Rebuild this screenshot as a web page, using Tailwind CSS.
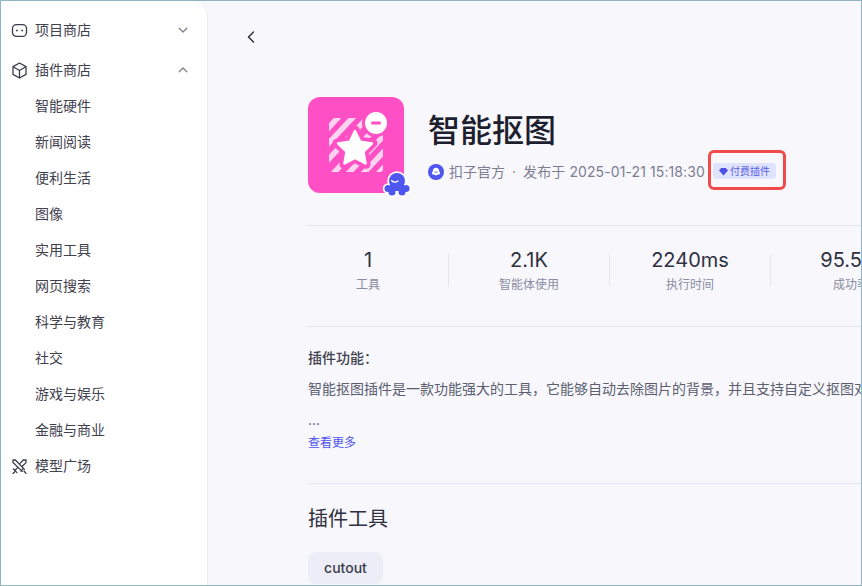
<!DOCTYPE html>
<html lang="zh-CN">
  <head>
    <meta charset="UTF-8" />
    <meta name="viewport" content="width=device-width, initial-scale=1.0" />
    <title>智能抠图</title>
    <script src="https://cdn.jsdelivr.net/npm/@tailwindcss/browser@4"></script>
  </head>
  <body class="m-0 overflow-hidden bg-[#f7f7fc] font-['Inter','Noto_Sans_CJK_SC',sans-serif]">
    <div class="flex h-[586px] w-[862px] overflow-hidden border border-[#8fb4c4] bg-[#f7f7fc]">
      <!-- sidebar -->
      <aside class="h-full w-[207px] shrink-0 rounded-tr-2xl border-r border-[#ebebf3] bg-white pt-[11px] text-sm text-[#3f414e]">
        <div class="flex h-9 items-center pl-[10px] pr-[19px]">
          <svg class="mr-[7px] size-[17px] text-[#3a3c4a]" viewBox="0 0 17 17" fill="none" stroke="currentColor" stroke-width="1.3">
            <rect x="1.5" y="2.6" width="14" height="11.8" rx="4" />
            <circle cx="5.9" cy="8.5" r="0.9" fill="currentColor" stroke="none" />
            <circle cx="11.1" cy="8.5" r="0.9" fill="currentColor" stroke="none" />
          </svg>
          <span class="flex-1">项目商店</span>
          <svg class="size-[10px] text-[#7e8092]" viewBox="0 0 10 10" fill="none" stroke="currentColor" stroke-width="1.3" stroke-linecap="round" stroke-linejoin="round"><path d="M1.2 3.2 5 7l3.8-3.8" /></svg>
        </div>
        <div class="mt-1 flex h-9 items-center pl-[10px] pr-[19px]">
          <svg class="mr-[7px] size-[17px] text-[#3a3c4a]" viewBox="0 0 17 17" fill="none" stroke="currentColor" stroke-width="1.3" stroke-linejoin="round">
            <path d="M8.5 1 15 4.600v7.800L8.500 16 2 12.400V4.600Z" />
            <path d="M2.200 4.800 8.500 8.500l6.300-3.700M8.500 8.500V16" />
          </svg>
          <span class="flex-1">插件商店</span>
          <svg class="size-[10px] text-[#7e8092]" viewBox="0 0 10 10" fill="none" stroke="currentColor" stroke-width="1.3" stroke-linecap="round" stroke-linejoin="round"><path d="M1.2 6.800 5 3l3.800 3.800" /></svg>
        </div>
        <ul class="pl-[34px]">
          <li class="flex h-9 items-center">智能硬件</li>
          <li class="flex h-9 items-center">新闻阅读</li>
          <li class="flex h-9 items-center">便利生活</li>
          <li class="flex h-9 items-center">图像</li>
          <li class="flex h-9 items-center">实用工具</li>
          <li class="flex h-9 items-center">网页搜索</li>
          <li class="flex h-9 items-center">科学与教育</li>
          <li class="flex h-9 items-center">社交</li>
          <li class="flex h-9 items-center">游戏与娱乐</li>
          <li class="flex h-9 items-center">金融与商业</li>
        </ul>
        <div class="flex h-9 items-center pl-[10px] pr-[18px]">
          <svg class="mr-[7px] size-[17px] text-[#3a3c4a]" viewBox="0 0 17 17" fill="none" stroke="currentColor" stroke-width="1.3" stroke-linecap="round">
            <path d="M2 2h2.400l9 9.400M2 2v2.400l9.200 9" />
            <path d="M15 2h-2.600L8.800 5.600M15 2v2.600l-3.400 3.400" />
            <path d="M2.400 11l3.600 3.600M3.600 14 2 15.400M12.400 10.400 10 13.200M13 13l2 2.400M6.600 9.600 4 12.400" />
          </svg>
          <span>模型广场</span>
        </div>
      </aside>

      <!-- main -->
      <main class="min-w-0 flex-1 overflow-hidden pl-[100px]">
        <button class="-ml-[64px] mt-[29px] block size-[14px] text-[#2f3140]">
          <svg class="size-[14px]" viewBox="0 0 14 14" fill="none" stroke="currentColor" stroke-width="1.5" stroke-linecap="round" stroke-linejoin="round"><path d="M9.500 2 4.500 7l5 5" /></svg>
        </button>

        <div class="mt-[53px] flex items-start">
          <div class="relative size-24 shrink-0">
            <svg class="size-24 rounded-xl" viewBox="0 0 96 96">
              <defs>
                <clipPath id="tile"><rect x="21" y="21" width="54" height="54" rx="3" /></clipPath>
              </defs>
              <rect width="96" height="96" fill="#ff4fc4" />
              <g clip-path="url(#tile)" stroke="#ffd2f0" stroke-width="5.500">
                <path d="M15 37 35 15M15 52 50 15M15 68 65 15M22 80 82 15M37 80 82 32M52 80 82 48M67 80 82 64" />
              </g>
              <path d="M47 33l5.500 11.300 12.500 1.800-9 8.800 2.100 12.400L47 61.400l-11.100 5.900L38 54.900l-9-8.800 12.500-1.800Z" fill="#ff4fc4" stroke="#ff4fc4" stroke-width="9" stroke-linejoin="round" />
              <path d="M47 34l5.200 10.700 11.800 1.700-8.500 8.300 2 11.700L47 60.900l-10.500 5.500 2-11.700-8.500-8.300 11.800-1.700Z" fill="#fff" stroke="#fff" stroke-width="2.500" stroke-linejoin="round" />
              <circle cx="68" cy="26" r="14" fill="#ff4fc4" />
              <circle cx="68" cy="26" r="11" fill="#fff" />
              <rect x="63" y="24.500" width="10" height="3" rx="1.500" fill="#ff4fc4" />
            </svg>
            <svg class="absolute -bottom-[8px] -right-[9px] size-[32px]" viewBox="0 0 32 32">
              <g fill="#fff" stroke="#fff" stroke-width="3.500">
                <circle cx="16" cy="12" r="8" />
                <circle cx="7" cy="19.500" r="3.500" />
                <circle cx="25" cy="19.500" r="3.500" />
                <circle cx="11" cy="23" r="3.500" />
                <circle cx="21" cy="23" r="3.500" />
              </g>
              <g fill="#4e55f0">
                <circle cx="16" cy="12" r="8" />
                <rect x="9" y="14" width="14" height="8" />
                <circle cx="7" cy="19.500" r="3.500" />
                <circle cx="25" cy="19.500" r="3.500" />
                <circle cx="11" cy="23" r="3.500" />
                <circle cx="21" cy="23" r="3.500" />
              </g>
              <path d="M10.500 11.500q3 3 6.500 .5" fill="none" stroke="#fff" stroke-width="1.300" stroke-linecap="round" />
            </svg>
          </div>

          <div class="ml-6 min-w-0">
            <h1 class="mt-[14px] whitespace-nowrap text-[32px] leading-10 font-medium text-[#1d1f2e]">智能抠图</h1>
            <div class="mt-px flex h-10 items-center whitespace-nowrap text-sm text-[#7c7e92]">
              <svg class="mr-[5px] size-[16px] shrink-0" viewBox="0 0 16 16">
                <circle cx="8" cy="8" r="8" fill="#4e55f0" />
                <path d="M8 3.800c2 0 3.200 1.400 3.200 3.200 0 .8.800 1.200.8 2.200 0 1.300-1.300 1.400-1.800 1-.7 1.300-3.700 1.300-4.400 0-.5.400-1.800.3-1.800-1 0-1 .8-1.400.8-2.200 0-1.800 1.200-3.200 3.200-3.200Z" fill="#fff" />
                <path d="M6.500 7.800q1.500 1.200 3 0" fill="none" stroke="#4e55f0" stroke-width=".9" />
              </svg>
              <span>扣子官方</span>
              <span class="mx-[7px]">·</span>
              <span class="tracking-[0.1px]">发布于 2025-01-21 15:18:30</span>
              <span class="relative ml-[8px] flex h-4 w-[63px] shrink-0 -translate-y-px items-center justify-center rounded bg-[#e0e3fd] text-[10px] text-[#5a5ee8]">
                <svg class="mr-[2px] size-[9px]" viewBox="0 0 10 10" fill="#4b50e6"><path d="M2.400 1h5.200L10 4 5 9.500 0 4Z" /></svg>
                付费插件
                <span class="absolute -bottom-[11px] -left-[5px] -right-[10px] -top-[13px] rounded-[6px] border-[3px] border-[#f04a4a]"></span>
              </span>
            </div>
          </div>
        </div>

        <div class="mt-[32px] w-[700px] border-t border-[#e4e5f0]">
          <div class="-ml-5 flex h-[100px] items-start whitespace-nowrap pt-5">
            <div class="w-[160px] shrink-0 text-center">
              <div class="text-xl leading-7 text-[#2f3140]">1</div>
              <div class="mt-px text-xs leading-5 text-[#8a8c9f]">工具</div>
            </div>
            <div class="mt-2 h-8 w-px shrink-0 bg-[#e4e5f0]"></div>
            <div class="w-[160px] shrink-0 text-center">
              <div class="text-xl leading-7 text-[#2f3140]">2.1K</div>
              <div class="mt-px text-xs leading-5 text-[#8a8c9f]">智能体使用</div>
            </div>
            <div class="mt-2 h-8 w-px shrink-0 bg-[#e4e5f0]"></div>
            <div class="w-[160px] shrink-0 text-center">
              <div class="text-xl leading-7 text-[#2f3140]">2240ms</div>
              <div class="mt-px text-xs leading-5 text-[#8a8c9f]">执行时间</div>
            </div>
            <div class="mt-2 h-8 w-px shrink-0 bg-[#e4e5f0]"></div>
            <div class="w-[160px] shrink-0 text-center">
              <div class="text-xl leading-7 text-[#2f3140]">95.5%</div>
              <div class="mt-px text-xs leading-5 text-[#8a8c9f]">成功率</div>
            </div>
          </div>
        </div>

        <section class="w-[700px] border-t border-[#e4e5f0] pt-[21px]">
          <h2 class="text-sm leading-5 font-medium text-[#3f414e]">插件功能：</h2>
          <p class="mt-[11px] whitespace-nowrap text-sm leading-5 text-[#5c5e70]">智能抠图插件是一款功能强大的工具，它能够自动去除图片的背景，并且支持自定义抠图对象和背景颜色。</p>
          <p class="mt-[11px] text-sm leading-5 text-[#5c5e70]">...</p>
          <a class="mt-[3px] block text-xs leading-5 text-[#4d53ee]">查看更多</a>
        </section>

        <section class="mt-[30px] w-[700px] border-t border-[#e4e5f0] pt-[21px]">
          <h2 class="text-xl leading-7 font-normal text-[#2f3140]">插件工具</h2>
          <button class="mt-[19px] flex h-[32px] w-[75px] items-center justify-center rounded-lg bg-[#ecedf6] text-sm font-medium text-[#3a3c4a]">cutout</button>
        </section>
      </main>
    </div>
  </body>
</html>
